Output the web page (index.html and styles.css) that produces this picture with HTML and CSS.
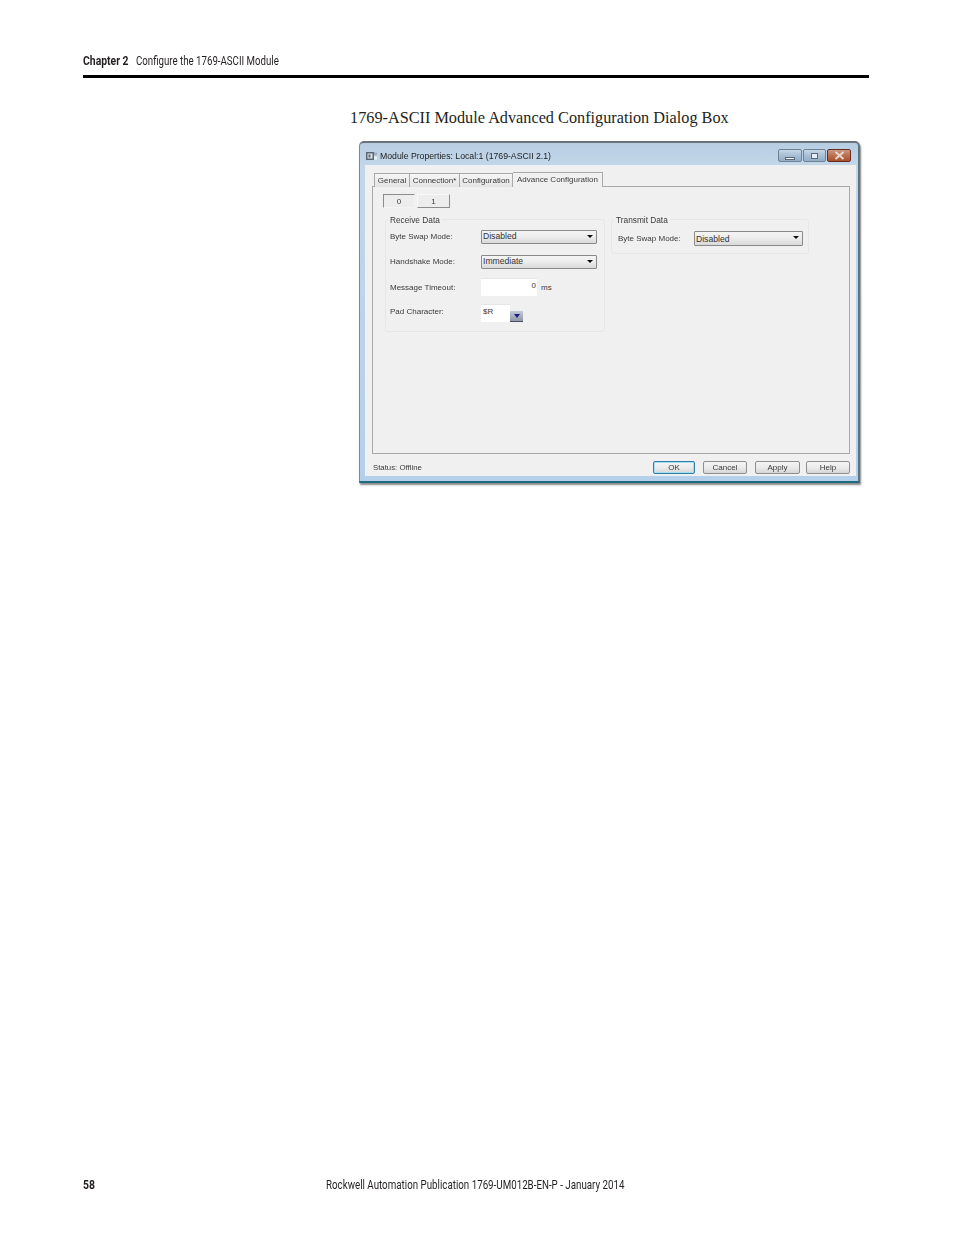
FILE: index.html
```html
<!DOCTYPE html>
<html lang="en">
<head>
    <meta charset="UTF-8">
    <title>Configure the 1769-ASCII Module</title>
    <link rel="stylesheet" href="styles.css">
</head>
<body>
    <div class="page">
        <div class="running-head">
            <b>Chapter 2</b>
            <span>Configure the 1769-ASCII Module</span>
        </div>

        <h3 class="caption">1769-ASCII Module Advanced Configuration Dialog Box</h3>

        <div class="window">
            <div class="titlebar">
                <svg class="app-icon" width="11" height="8" viewBox="0 0 11 8">
                    <rect x="0" y="0" width="8" height="8" fill="#5a6672"/>
                    <rect x="1.5" y="1.5" width="5" height="5" fill="#dfe5ea"/>
                    <rect x="2.5" y="2.5" width="2" height="3" fill="#5a6672"/>
                    <rect x="8" y="0.5" width="3" height="3" fill="#a3aeb9"/>
                    <rect x="8" y="4.5" width="3" height="3" fill="#eef1f4"/>
                </svg>
                <span class="title">Module Properties: Local:1 (1769-ASCII 2.1)</span>
                <div class="caption-btns">
                    <div class="cap-btn cap-min"><i></i></div>
                    <div class="cap-btn cap-max"><i></i></div>
                    <div class="cap-btn cap-close">
                        <svg width="11" height="9" viewBox="0 0 11 9">
                            <path d="M1.5 1 L9.5 8 M9.5 1 L1.5 8" stroke="#e6d8d0" stroke-width="2"/>
                        </svg>
                    </div>
                </div>
            </div>

            <div class="client">
                <div class="tabs">
                    <div class="tab tab-general">General</div>
                    <div class="tab tab-connection">Connection*</div>
                    <div class="tab tab-config">Configuration</div>
                    <div class="tab tab-active">Advance Configuration</div>
                </div>

                <div class="panel">
                    <div class="channels">
                        <div class="channel channel-on">0</div>
                        <div class="channel">1</div>
                    </div>

                    <div class="groups">
                        <div class="group group-receive">
                            <span class="legend">Receive Data</span>
                            <div class="row row-1">
                                <label>Byte Swap Mode:</label>
                                <div class="select select-receive">Disabled<i></i></div>
                            </div>
                            <div class="row row-2">
                                <label>Handshake Mode:</label>
                                <div class="select select-receive">Immediate<i></i></div>
                            </div>
                            <div class="row row-3">
                                <label>Message Timeout:</label>
                                <div class="input input-timeout">0</div>
                                <span class="unit">ms</span>
                            </div>
                            <div class="row row-4">
                                <label>Pad Character:</label>
                                <div class="input input-pad">$R</div>
                                <div class="pad-btn"><i></i></div>
                            </div>
                        </div>

                        <div class="group group-transmit">
                            <span class="legend">Transmit Data</span>
                            <div class="row row-transmit">
                                <label>Byte Swap Mode:</label>
                                <div class="select select-transmit">Disabled<i></i></div>
                            </div>
                        </div>
                    </div>
                </div>

                <div class="statusbar">
                    <span class="status">Status: Offline</span>
                    <div class="actions">
                        <div class="btn btn-ok">OK</div>
                        <div class="btn btn-cancel">Cancel</div>
                        <div class="btn btn-apply">Apply</div>
                        <div class="btn btn-help">Help</div>
                    </div>
                </div>
            </div>
        </div>

        <div class="footer">
            <b>58</b>
            <span>Rockwell Automation Publication 1769-UM012B-EN-P - January 2014</span>
        </div>
    </div>
</body>
</html>
```

FILE: styles.css
```css
html, body {
    margin: 0;
    background: #fff;
}
.page {
    box-sizing: border-box;
    height: 1235px;
    padding: 0 85px 0 83px;
    display: flex;
    flex-direction: column;
    font-family: "Roboto", sans-serif;
    color: #231f20;
}
/* the print face is condensed, so Roboto gets squeezed sideways */
.running-head b, .running-head span, .footer b, .footer span {
    display: inline-block;
    transform-origin: left center;
    white-space: nowrap;
}
.running-head {
    height: 75px;
    border-bottom: 3px solid #000;
    font-size: 13px;
    line-height: 15px;
    display: flex;
    align-items: flex-end;
}
.running-head b {
    width: 53px;
    margin-bottom: 7px;
    transform: scaleX(0.8);
}
.running-head span {
    margin-bottom: 7px;
    transform: scaleX(0.745);
}
.caption {
    margin: 30px 0 0 267px;
    font-family: "Liberation Serif", serif;
    font-weight: normal;
    font-size: 16.25px;
    line-height: 20px;
    color: #231f20;
}

/* dialog */
.window {
    box-sizing: border-box;
    margin: 13px 0 0 276px;
    width: 501px;
    height: 342px;
    padding: 0 2px 5px 5px;
    background: linear-gradient(to bottom, #b7cde2 0, #c3d7ea 22px, #b4d0ea 100%);
    border-top: 2px solid #6b7279;
    border-right: 2px solid #5b7484;
    border-bottom: 2px solid #1f6a80;
    border-left: 1px solid #7a8a96;
    border-radius: 5px 5px 0 0;
    box-shadow: 1px 2px 2px #888;
    font-family: "Liberation Sans", sans-serif;
    font-size: 8px;
    color: #3a3a3a;
    display: flex;
    flex-direction: column;
}
.titlebar {
    box-sizing: border-box;
    height: 22px;
    padding-top: 3px;
    flex: none;
    display: flex;
    align-items: center;
    color: #222;
}
.app-icon {
    margin-left: 1px;
}
.title {
    margin-left: 3px;
    font-size: 8.7px;
    filter: blur(0.3px);
}
.caption-btns {
    margin-left: auto;
    margin-right: 5px;
    display: flex;
    gap: 1px;
    align-self: flex-start;
    margin-top: 3px;
}
.cap-btn {
    box-sizing: border-box;
    height: 13px;
    border: 1px solid #6e8296;
    border-radius: 2px;
    display: flex;
    align-items: center;
    justify-content: center;
    background: linear-gradient(to bottom, #c6d6e6 0, #a9bfd5 50%, #93aec8 100%);
}
.cap-min {
    width: 24px;
}
.cap-min i {
    width: 8px;
    height: 1px;
    margin-top: 5px;
    background: #f4f6f8;
    border: 1px solid #56687a;
}
.cap-max {
    width: 23px;
}
.cap-max i {
    box-sizing: border-box;
    width: 7px;
    height: 6px;
    border: 1px solid #56687a;
    background: #e8eef4;
}
.cap-close {
    width: 24px;
    border-color: #6b2a1e;
    background: linear-gradient(to bottom, #c99a82 0, #bb6f4e 50%, #a8502f 100%);
}
.client {
    flex: 1;
    background: #f0f0f0;
    padding: 7px 6px 0 7px;
    display: flex;
    flex-direction: column;
    min-height: 0;
}
.tabs {
    display: flex;
    height: 14px;
    margin-left: 2px;
    position: relative;
    z-index: 1;
}
.tab {
    box-sizing: border-box;
    height: 14px;
    margin-top: 1px;
    border: 1px solid #a9a9a9;
    border-bottom: none;
    text-align: center;
    line-height: 14px;
    background: linear-gradient(to bottom, #f6f6f6, #e4e4e4);
    filter: blur(0.2px);
    white-space: nowrap;
}
.tab-general {
    width: 36px;
}
.tab-connection {
    width: 50px;
    border-left: none;
}
.tab-config {
    width: 53px;
    border-left: none;
}
.tab-active {
    width: 90px;
    height: 15px;
    margin-top: 0;
    border-left: none;
    background: #f0f0f0;
    line-height: 13px;
}
.panel {
    flex: 1;
    border: 1px solid #a9a9a9;
    padding: 7px 0 0 10px;
    min-height: 0;
}
.channels {
    display: flex;
    gap: 2px;
}
.channel {
    box-sizing: border-box;
    width: 33px;
    height: 14px;
    text-align: center;
    line-height: 13px;
    background: #ededed;
    border: 1px solid;
    border-color: #f8f8f8 #8c8c8c #8c8c8c #f8f8f8;
    filter: blur(0.2px);
}
.channel-on {
    width: 32px;
    border-color: #8c8c8c #f4f4f4 #f4f4f4 #8c8c8c;
}
.groups {
    margin: 11px 0 0 2px;
    display: flex;
    gap: 6px;
    align-items: flex-start;
}
.group {
    box-sizing: border-box;
    position: relative;
    border: 1px solid #e6e6e6;
    border-radius: 3px;
}
.group-receive {
    width: 220px;
    height: 113px;
}
.group-transmit {
    width: 198px;
    height: 35px;
}
.legend {
    position: absolute;
    left: 2px;
    top: -5px;
    padding: 0 2px;
    background: #f0f0f0;
    font-size: 8.3px;
    line-height: 10px;
    filter: blur(0.3px);
}
.row {
    display: flex;
    align-items: center;
    padding-left: 4px;
}
.row label {
    width: 91px;
    flex: none;
    filter: blur(0.3px);
}
.row-1 {
    margin-top: 9px;
    height: 15px;
}
.row-2 {
    margin-top: 10px;
    height: 15px;
}
.row-3 {
    margin-top: 9px;
    height: 18px;
}
.row-4 {
    margin-top: 8px;
    height: 18px;
    align-items: flex-start;
}
.row-4 label {
    margin-top: 3px;
}
.row-transmit {
    padding-left: 6px;
    margin-top: 11px;
    height: 15px;
}
.row-transmit label {
    width: 76px;
}
.select {
    box-sizing: border-box;
    height: 14px;
    position: relative;
    padding-left: 1px;
    font-size: 8.6px;
    line-height: 11px;
    border: 1px solid #8a8a8a;
    border-radius: 1px;
    background: linear-gradient(to bottom, #f4f4f4 0, #ececec 50%, #d9d9d9 100%);
    color: #333;
}
.select-receive {
    width: 116px;
}
.select-transmit {
    width: 109px;
    height: 15px;
    line-height: 14px;
}
.select i, .pad-btn i {
    position: absolute;
    right: 3px;
    top: 4px;
    border-left: 3px solid transparent;
    border-right: 3px solid transparent;
    border-top: 3px solid #111;
}
.input {
    box-sizing: border-box;
    height: 18px;
    background: #fff;
    border-top: 1px solid #e6e6e6;
    line-height: 13px;
}
.input-timeout {
    width: 56px;
    text-align: right;
    padding-right: 1px;
}
.input-pad {
    width: 29px;
    padding-left: 2px;
}
.unit {
    margin-left: 4px;
    margin-top: 1px;
}
.pad-btn {
    box-sizing: border-box;
    position: relative;
    width: 13px;
    height: 11px;
    margin-top: 7px;
    background: linear-gradient(to bottom, #c3c9d4, #8f97a8);
    border-bottom: 1px solid #4a4f5e;
}
.pad-btn i {
    right: 3px;
    top: 3px;
    border-top: 4px solid #1c1c8c;
}
.statusbar {
    height: 22px;
    flex: none;
    display: flex;
    align-items: flex-start;
    justify-content: space-between;
}
.status {
    margin: 9px 0 0 1px;
    font-size: 7.8px;
    filter: blur(0.2px);
}
.actions {
    display: flex;
    margin-top: 7px;
}
.btn {
    box-sizing: border-box;
    height: 13px;
    text-align: center;
    line-height: 11px;
    border: 1px solid #8f8f8f;
    border-radius: 2px;
    background: linear-gradient(to bottom, #f4f4f4 0, #ebebeb 50%, #d6d6d6 100%);
    filter: blur(0.2px);
}
.btn-ok {
    width: 42px;
    border-color: #2f7ea6;
    box-shadow: inset 0 0 0 1px #a9dff3;
}
.btn-cancel {
    width: 44px;
    margin-left: 8px;
}
.btn-apply {
    width: 45px;
    margin-left: 8px;
}
.btn-help {
    width: 44px;
    margin-left: 6px;
}

.footer {
    margin-top: auto;
    margin-bottom: 43px;
    position: relative;
    font-size: 13px;
    line-height: 15px;
}
.footer b {
    transform: scaleX(0.8);
}
.footer span {
    position: absolute;
    left: 243px;
    top: 0;
    transform: scaleX(0.751);
}
```
